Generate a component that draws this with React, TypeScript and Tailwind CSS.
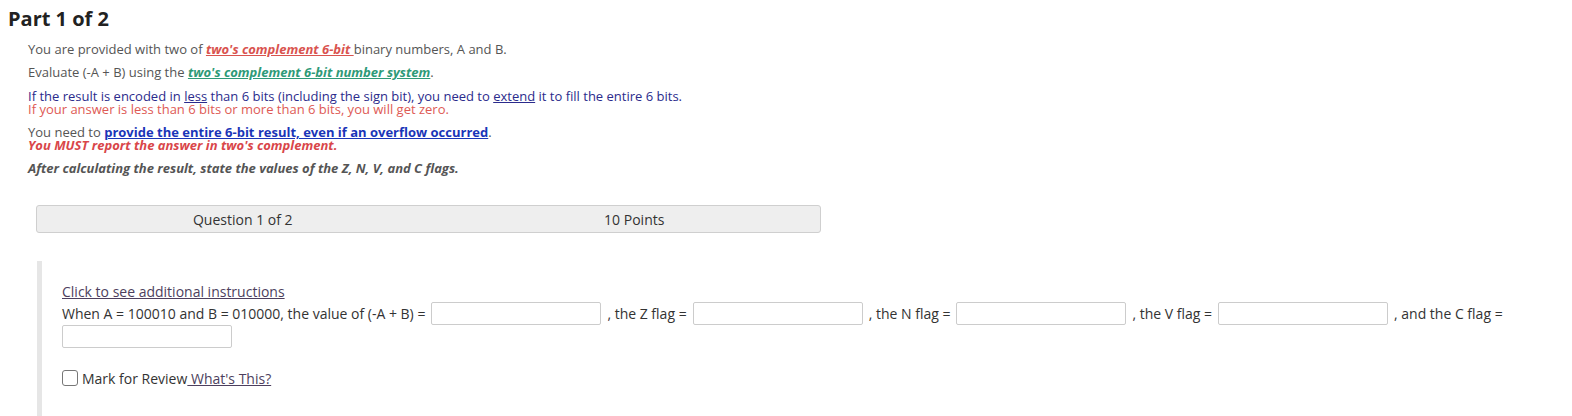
export default function App() {
  const font = { fontFamily: '"Open Sans", "Liberation Sans", sans-serif' };
  const inputCls =
    "inline-block align-top w-[170px] h-[23px] border border-[#cccccc] rounded-[2px] bg-white mx-[6px]";

  return (
    <div className="w-[1572px] h-[416px] overflow-hidden bg-white text-[#333]" style={font}>
      <h1 className="pl-[8px] pt-[6px] text-[20px] leading-[26px] font-bold text-[#222]">Part 1 of 2</h1>

      <div className="pl-[28px] pt-[11px] text-[13px] leading-[13px] text-[#555]">
        <p>
          You are provided with two of{" "}
          <span className="font-bold italic underline text-[#d9534f]">two's complement 6-bit </span>
          binary numbers, A and B.
        </p>
        <p className="mt-[10px]">
          Evaluate (-A + B) using the{" "}
          <span className="font-bold italic underline text-[#2e9a78]">two's complement 6-bit number system</span>.
        </p>
        <p className="mt-[11px] text-[#2b2b8c]">
          If the result is encoded in <span className="underline">less</span> than 6 bits (including the sign bit), you
          need to <span className="underline">extend</span> it to fill the entire 6 bits.
          <br />
          <span className="text-[#de5a55]">If your answer is less than 6 bits or more than 6 bits, you will get zero.</span>
        </p>
        <p className="mt-[10px]">
          You need to{" "}
          <span className="font-bold underline text-[#1a35b8]">provide the entire 6-bit result, even if an overflow occurred</span>
          .
          <br />
          <span className="font-bold italic text-[#d9464a]">You MUST report the answer in two's complement.</span>
        </p>
        <p className="mt-[10px] font-bold italic">After calculating the result, state the values of the Z, N, V, and C flags.</p>
      </div>

      <div className="ml-[36px] mt-[30px] w-[785px] h-[28px] flex items-center border border-[#cfcfcf] rounded-[3px] bg-[#eeeeee] text-[14px] text-[#333]">
        <div className="flex-1 pl-[20px] text-center">Question 1 of 2</div>
        <div className="flex-1 pl-[20px] text-center">10 Points</div>
      </div>

      <div className="ml-[37px] mt-[28px] border-l-[5px] border-[#e6e6e6] pl-[20px] pt-[21px] pb-[40px] pr-[10px] text-[14px] text-[#333]">
        <a className="underline text-[#4d3f5e] leading-[20px] block">Click to see additional instructions</a>
        <div className="leading-[23px]">
          When A = 100010 and B = 010000, the value of (-A + B) =<span className={inputCls} />, the Z flag =
          <span className={inputCls} />, the N flag =<span className={inputCls} />, the V flag =
          <span className={inputCls} />, and the C flag =<span className={inputCls + " !ml-0"} />
        </div>
        <div className="mt-[21px] flex items-center h-[18px]">
          <span className="inline-block w-[16px] h-[16px] border border-[#777] rounded-[3px] bg-white mr-[4px]" />
          <span className="whitespace-pre">Mark for Review</span>
          <a className="underline text-[#4d3f5e] whitespace-pre"> What's This?</a>
        </div>
      </div>
    </div>
  );
}
